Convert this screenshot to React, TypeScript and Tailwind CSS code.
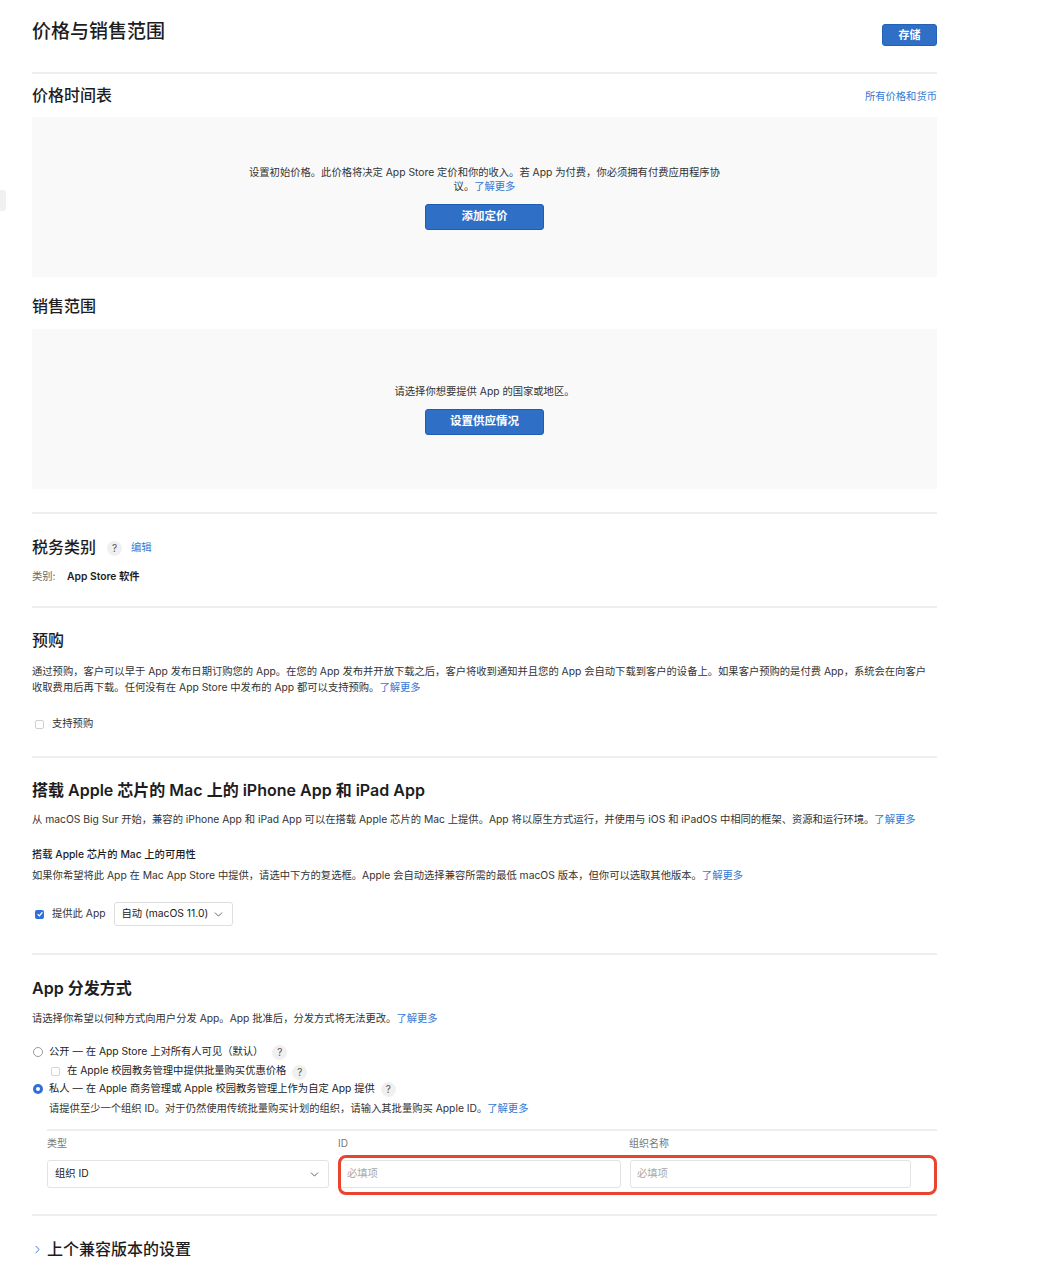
import { ChevronDown, ChevronRight } from "lucide-react";

const font = "font-['Inter','Noto_Sans_CJK_SC',sans-serif]";

function Divider({ className = "" }: { className?: string }) {
  return <div className={`h-[2px] bg-[#eeeeee] ${className}`} />;
}

function Help({ className = "" }: { className?: string }) {
  return (
    <span
      className={`inline-flex h-[15px] w-[15px] items-center justify-center rounded-full bg-[#f0f0f0] text-[10px] text-[#555] ${className}`}
    >
      ?
    </span>
  );
}

function More() {
  return <span className="text-[#3478d4]">了解更多</span>;
}

function BlueButton({ label }: { label: string }) {
  return (
    <button className="h-[26px] w-[119px] rounded-[3px] border border-[#1f5cb3] bg-[#2f6fc6] text-[11.5px] font-semibold text-white">
      {label}
    </button>
  );
}

export default function App() {
  return (
    <div className={`relative min-h-[1282px] bg-white text-[#1d1d1f] ${font}`}>
      <div className="absolute left-0 top-[190px] h-[21px] w-[6px] rounded-r-[3px] bg-[#f1f1f1]" />

      <div className="ml-[32px] w-[905px] pt-[20px]">
        {/* page header */}
        <div className="flex h-[52px] items-start justify-between">
          <h1 className="text-[19px] font-medium leading-[24px]">价格与销售范围</h1>
          <button className="mt-[4px] h-[22px] w-[55px] rounded-[3px] border border-[#2362b8] bg-[#2f6fc6] text-[11px] font-semibold text-white">
            存储
          </button>
        </div>
        <Divider />

        {/* price schedule */}
        <div className="mt-[10px] flex items-center justify-between">
          <h2 className="text-[16px] font-medium leading-[22px]">价格时间表</h2>
          <span className="mt-[3px] text-[10.3px] text-[#3478d4]">所有价格和货币</span>
        </div>
        <div className="mt-[11px] flex h-[160px] flex-col items-center bg-[#f9f9f9] pt-[48px]">
          <p className="text-center text-[10.3px] leading-[14px] text-[#333]">
            设置初始价格。此价格将决定 App Store 定价和你的收入。若 App 为付费，你必须拥有付费应用程序协
            <br />
            议。<More />
          </p>
          <div className="mt-[9px]">
            <BlueButton label="添加定价" />
          </div>
        </div>

        {/* availability */}
        <h2 className="mt-[18px] text-[16px] font-medium leading-[22px]">销售范围</h2>
        <div className="mt-[12px] flex h-[160px] flex-col items-center bg-[#f9f9f9] pt-[55px]">
          <p className="text-[10.3px] leading-[14px] text-[#333]">请选择你想要提供 App 的国家或地区。</p>
          <div className="mt-[9px]">
            <BlueButton label="设置供应情况" />
          </div>
        </div>

        <Divider className="mt-[23px]" />

        {/* tax category */}
        <div className="mt-[22px] flex items-center">
          <h2 className="text-[16px] font-medium leading-[22px]">税务类别</h2>
          <Help className="ml-[11px] mt-[2px]" />
          <span className="ml-[9px] mt-[2px] text-[10.3px] text-[#3478d4]">编辑</span>
        </div>
        <div className="mt-[11px] flex items-center text-[10.3px] leading-[14px]">
          <span className="w-[35px] text-[#666]">类别:</span>
          <span className="font-semibold text-[#1d1d1f]">App Store 软件</span>
        </div>

        <Divider className="mt-[23px]" />

        {/* pre-order */}
        <h2 className="mt-[21px] text-[16px] font-medium leading-[22px]">预购</h2>
        <p className="mt-[12px] text-[10.3px] leading-[16px] text-[#333]">
          通过预购，客户可以早于 App 发布日期订购您的 App。在您的 App 发布并开放下载之后，客户将收到通知并且您的 App 会自动下载到客户的设备上。如果客户预购的是付费 App，系统会在向客户
          <br />
          收取费用后再下载。任何没有在 App Store 中发布的 App 都可以支持预购。<More />
        </p>
        <div className="mt-[22px] flex h-[14px] items-center text-[10.3px] text-[#333]">
          <span className="ml-[3px] h-[9px] w-[9px] rounded-[2px] border border-[#cfcfcf] bg-white" />
          <span className="ml-[8px]">支持预购</span>
        </div>

        <Divider className="mt-[25px]" />

        {/* apple silicon mac */}
        <h2 className="mt-[21px] text-[16px] font-semibold leading-[22px]">
          搭载 Apple 芯片的 Mac 上的 iPhone App 和 iPad App
        </h2>
        <p className="mt-[10px] text-[10.3px] leading-[16px] text-[#333]">
          从 macOS Big Sur 开始，兼容的 iPhone App 和 iPad App 可以在搭载 Apple 芯片的 Mac 上提供。App 将以原生方式运行，并使用与 iOS 和 iPadOS 中相同的框架、资源和运行环境。<More />
        </p>
        <h3 className="mt-[20px] text-[10.3px] font-medium leading-[14px] text-[#1d1d1f]">
          搭载 Apple 芯片的 Mac 上的可用性
        </h3>
        <p className="mt-[6px] text-[10.3px] leading-[16px] text-[#333]">
          如果你希望将此 App 在 Mac App Store 中提供，请选中下方的复选框。Apple 会自动选择兼容所需的最低 macOS 版本，但你可以选取其他版本。<More />
        </p>
        <div className="mt-[19px] flex items-center text-[10.3px] text-[#333]">
          <span className="ml-[3px] flex h-[9px] w-[9px] items-center justify-center rounded-[2px] bg-[#2f6fd8]">
            <svg viewBox="0 0 10 10" className="h-[8px] w-[8px]">
              <path d="M2 5.2 L4.2 7.3 L8 2.8" fill="none" stroke="white" strokeWidth="1.6" />
            </svg>
          </span>
          <span className="ml-[8px]">提供此 App</span>
          <div className="ml-[8px] flex h-[24px] w-[119px] items-center justify-between rounded-[3px] border border-[#dedede] bg-white pl-[7px] pr-[7px] text-[#222]">
            <span>自动 (macOS 11.0)</span>
            <ChevronDown size={13} strokeWidth={1.5} className="text-[#444]" />
          </div>
        </div>

        <Divider className="mt-[27px]" />

        {/* distribution */}
        <h2 className="mt-[22px] text-[16px] font-semibold leading-[22px]">App 分发方式</h2>
        <p className="mt-[11px] text-[10.3px] leading-[16px] text-[#333]">
          请选择你希望以何种方式向用户分发 App。App 批准后，分发方式将无法更改。<More />
        </p>

        <div className="mt-[17px] flex h-[18px] items-center text-[10.3px] text-[#222]">
          <span className="ml-[1px] h-[10px] w-[10px] rounded-full border border-[#9a9a9a] bg-white" />
          <span className="ml-[6px]">公开 — 在 App Store 上对所有人可见（默认）</span>
          <Help className="ml-[9px]" />
        </div>
        <div className="mt-[1px] flex h-[18px] items-center text-[10.3px] text-[#222]">
          <span className="ml-[19px] h-[9px] w-[9px] rounded-[2px] border border-[#d4d4d4] bg-white" />
          <span className="ml-[7px]">在 Apple 校园教务管理中提供批量购买优惠价格</span>
          <Help className="ml-[6px] mt-[2px]" />
        </div>
        <div className="flex h-[18px] items-center text-[10.3px] text-[#222]">
          <span className="ml-[1px] flex h-[10px] w-[10px] items-center justify-center rounded-full bg-[#2f6fd8]">
            <span className="h-[4px] w-[4px] rounded-full bg-white" />
          </span>
          <span className="ml-[6px]">私人 — 在 Apple 商务管理或 Apple 校园教务管理上作为自定 App 提供</span>
          <Help className="ml-[6px]" />
        </div>
        <p className="mt-[1px] pl-[17px] text-[10.3px] leading-[18px] text-[#333]">
          请提供至少一个组织 ID。对于仍然使用传统批量购买计划的组织，请输入其批量购买 Apple ID。<More />
        </p>

        <div className="ml-[15px]">
          <Divider className="mt-[12px]" />
          <div className="mt-[6px] grid grid-cols-[291px_291px_1fr] text-[10px] leading-[12px] text-[#777]">
            <span>类型</span>
            <span>ID</span>
            <span>组织名称</span>
          </div>
          <div className="relative mt-[11px] grid grid-cols-[291px_291px_1fr]">
            <div className="mr-[9px] flex h-[28px] items-center justify-between rounded-[3px] border border-[#e3e3e3] bg-white pl-[7px] pr-[7px] text-[10.3px] text-[#222]">
              <span>组织 ID</span>
              <ChevronDown size={13} strokeWidth={1.5} className="text-[#444]" />
            </div>
            <div className="ml-[2px] mr-[8px] flex h-[28px] items-center rounded-[3px] border border-[#e3e3e3] bg-white pl-[6px] text-[10.3px] text-[#a8a8a8]">
              必填项
            </div>
            <div className="ml-[1px] mr-[26px] flex h-[28px] items-center rounded-[3px] border border-[#e3e3e3] bg-white pl-[6px] text-[10.3px] text-[#a8a8a8]">
              必填项
            </div>
            <div className="pointer-events-none absolute left-[291px] right-0 top-[-5px] h-[40px] rounded-[8px] border-[3px] border-[#e8442e]" />
          </div>
        </div>

        <Divider className="mt-[26px]" />

        <div className="mt-[22px] flex items-center">
          <ChevronRight size={13} strokeWidth={1.8} className="-ml-[1px] text-[#3478d4]" />
          <h2 className="ml-[3px] text-[16px] font-medium leading-[22px]">上个兼容版本的设置</h2>
        </div>
      </div>
    </div>
  );
}
